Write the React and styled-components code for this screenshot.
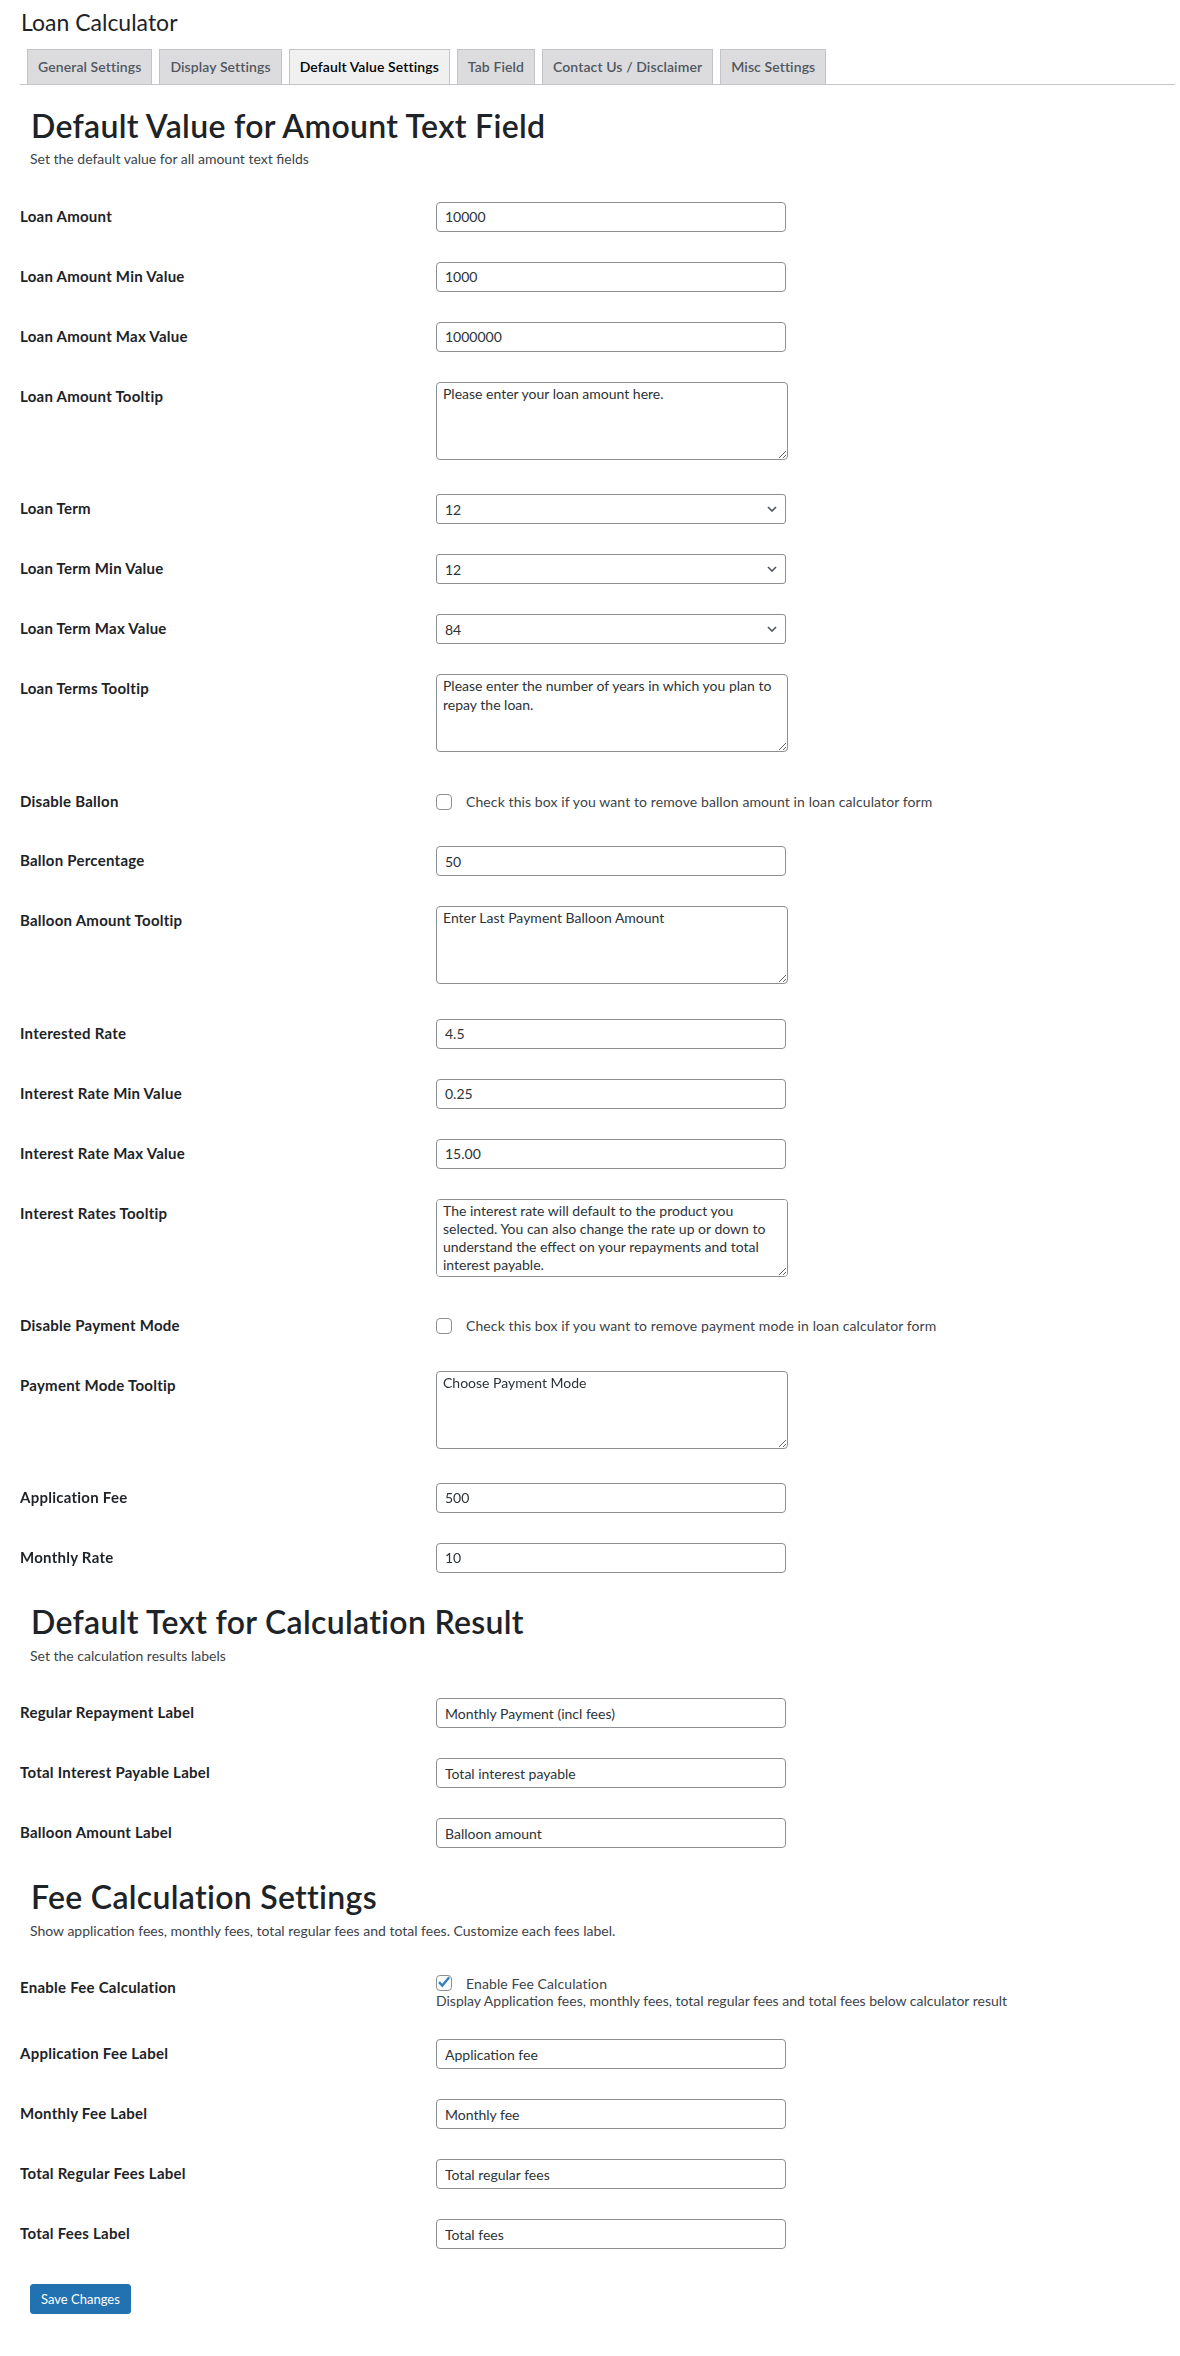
import React from 'react'
import styled, { createGlobalStyle } from 'styled-components'

const GlobalStyle = createGlobalStyle`
  body {
    margin: 0;
    background: #fff;
    color: #3c434a;
    font-family: Lato, "Noto Sans", sans-serif;
    font-size: 13px;
  }
`

const tabs = [
  'General Settings',
  'Display Settings',
  'Default Value Settings',
  'Tab Field',
  'Contact Us / Disclaimer',
  'Misc Settings',
]

const sections = [
  {
    title: 'Default Value for Amount Text Field',
    desc: 'Set the default value for all amount text fields',
    rows: [
      { label: 'Loan Amount', type: 'text', value: '10000' },
      { label: 'Loan Amount Min Value', type: 'text', value: '1000' },
      { label: 'Loan Amount Max Value', type: 'text', value: '1000000' },
      { label: 'Loan Amount Tooltip', type: 'textarea', value: 'Please enter your loan amount here.' },
      { label: 'Loan Term', type: 'select', value: '12' },
      { label: 'Loan Term Min Value', type: 'select', value: '12' },
      { label: 'Loan Term Max Value', type: 'select', value: '84' },
      {
        label: 'Loan Terms Tooltip',
        type: 'textarea',
        value: 'Please enter the number of years in which you plan to repay the loan.',
      },
      {
        label: 'Disable Ballon',
        type: 'checkbox',
        text: 'Check this box if you want to remove ballon amount in loan calculator form',
      },
      { label: 'Ballon Percentage', type: 'text', value: '50' },
      { label: 'Balloon Amount Tooltip', type: 'textarea', value: 'Enter Last Payment Balloon Amount' },
      { label: 'Interested Rate', type: 'text', value: '4.5' },
      { label: 'Interest Rate Min Value', type: 'text', value: '0.25' },
      { label: 'Interest Rate Max Value', type: 'text', value: '15.00' },
      {
        label: 'Interest Rates Tooltip',
        type: 'textarea',
        value:
          'The interest rate will default to the product you selected. You can also change the rate up or down to understand the effect on your repayments and total interest payable.',
      },
      {
        label: 'Disable Payment Mode',
        type: 'checkbox',
        text: 'Check this box if you want to remove payment mode in loan calculator form',
      },
      { label: 'Payment Mode Tooltip', type: 'textarea', value: 'Choose Payment Mode' },
      { label: 'Application Fee', type: 'text', value: '500' },
      { label: 'Monthly Rate', type: 'text', value: '10' },
    ],
  },
  {
    title: 'Default Text for Calculation Result',
    desc: 'Set the calculation results labels',
    rows: [
      { label: 'Regular Repayment Label', type: 'text', value: 'Monthly Payment (incl fees)' },
      { label: 'Total Interest Payable Label', type: 'text', value: 'Total interest payable' },
      { label: 'Balloon Amount Label', type: 'text', value: 'Balloon amount' },
    ],
  },
  {
    title: 'Fee Calculation Settings',
    desc: 'Show application fees, monthly fees, total regular fees and total fees. Customize each fees label.',
    rows: [
      {
        label: 'Enable Fee Calculation',
        type: 'fee',
        text: 'Enable Fee Calculation',
        note: 'Display Application fees, monthly fees, total regular fees and total fees below calculator result',
      },
      { label: 'Application Fee Label', type: 'text', value: 'Application fee' },
      { label: 'Monthly Fee Label', type: 'text', value: 'Monthly fee' },
      { label: 'Total Regular Fees Label', type: 'text', value: 'Total regular fees' },
      { label: 'Total Fees Label', type: 'text', value: 'Total fees' },
    ],
  },
]

const termOptions = ['12', '24', '36', '48', '60', '72', '84']

const Field = ({ row }) => {
  if (row.type === 'textarea') {
    return (
      <Cell>
        <TextArea defaultValue={row.value} />
      </Cell>
    )
  }
  if (row.type === 'select') {
    return (
      <Cell>
        <SelectWrap>
          <Select defaultValue={row.value}>
            {termOptions.map((o) => (
              <option key={o} value={o}>
                {o}
              </option>
            ))}
          </Select>
          <Chevron width="10" height="6" viewBox="0 0 10 6">
            <polyline points="1,1 5,5 9,1" fill="none" stroke="#50575e" strokeWidth="1.6" />
          </Chevron>
        </SelectWrap>
      </Cell>
    )
  }
  if (row.type === 'checkbox') {
    return (
      <CheckCell>
        <CheckLabel>
          <Check type="checkbox" />
          {row.text}
        </CheckLabel>
      </CheckCell>
    )
  }
  if (row.type === 'fee') {
    return (
      <Cell>
        <CheckLabel $tall>
          <CheckBox>
            <Check type="checkbox" defaultChecked />
            <Tick width="20" height="20" viewBox="0 0 20 20">
              <path d="M5 10.2 L8.3 13.6 L15.2 5.2" fill="none" stroke="#3582c4" strokeWidth="2.4" />
            </Tick>
          </CheckBox>
          {row.text}
        </CheckLabel>
        <Note>{row.note}</Note>
      </Cell>
    )
  }
  return (
    <Cell>
      <Input type="text" defaultValue={row.value} />
    </Cell>
  )
}

const App = () => {
  return (
    <Wrap>
      <GlobalStyle />
      <Title>Loan Calculator</Title>
      <Tabs>
        {tabs.map((t) => (
          <Tab key={t} $active={t === 'Default Value Settings'}>
            {t}
          </Tab>
        ))}
      </Tabs>
      <form>
        {sections.map((s, i) => (
          <Section key={s.title} $first={i === 0}>
            <Heading>{s.title}</Heading>
            <Desc>{s.desc}</Desc>
            <FormTable>
              {s.rows.map((r) => (
                <Row key={r.label}>
                  <Label>{r.label}</Label>
                  <Field row={r} />
                </Row>
              ))}
            </FormTable>
          </Section>
        ))}
        <Submit>
          <Button type="button">Save Changes</Button>
        </Submit>
      </form>
    </Wrap>
  )
}

//Styled Component
const Wrap = styled.div`
  padding: 0 5px 40px 20px;
`

const Title = styled.h1`
  margin: 0;
  padding: 8px 0 4px 1px;
  font-size: 23px;
  font-weight: 400;
  line-height: 1.3;
  color: #1d2327;
`

const Tabs = styled.nav`
  display: flex;
  margin-top: 7px;
  border-bottom: 1px solid #c3c4c7;
`

const Tab = styled.a`
  margin: 0 0 -1px 7px;
  padding: 5px 10px;
  border: 1px solid #c3c4c7;
  background: ${(p) => (p.$active ? '#f0f0f1' : '#dcdcde')};
  color: ${(p) => (p.$active ? '#000' : '#50575e')};
  font-size: 14px;
  font-weight: 600;
  letter-spacing: 0.1px;
  line-height: 24px;
  white-space: nowrap;
`

const Section = styled.div`
  margin-top: ${(p) => (p.$first ? '20px' : '13px')};
`

const Heading = styled.h2`
  margin: 0;
  padding-left: 11px;
  font-size: 32px;
  font-weight: 600;
  letter-spacing: 0.3px;
  line-height: 1.3;
  color: #1d2327;
`

const Desc = styled.p`
  margin: 3px 0 18px;
  padding-left: 10px;
  font-size: 14px;
  line-height: 19.5px;
  color: #3c434a;
`

const FormTable = styled.div`
  display: flex;
  flex-direction: column;
`

const Row = styled.div`
  display: grid;
  grid-template-columns: 416px 1fr;
`

const Label = styled.div`
  padding: 20px 10px 20px 0;
  font-size: 15px;
  font-weight: 700;
  letter-spacing: 0.25px;
  line-height: 18px;
  color: #1d2327;
`

const Cell = styled.div`
  padding: 15px 10px 15px 0;
  font-size: 14px;
  color: #3c434a;
`

const CheckCell = styled(Cell)`
  padding: 20.75px 10px 20.75px 0;
`

const Input = styled.input`
  box-sizing: border-box;
  display: block;
  width: 350px;
  height: 30px;
  padding: 0 8px;
  border: 1px solid #8c8f94;
  border-radius: 4px;
  background: #fff;
  color: #2c3338;
  font-family: inherit;
  font-size: 14px;
  line-height: 2;
`

const TextArea = styled.textarea`
  box-sizing: border-box;
  display: block;
  width: 352px;
  height: 78px;
  margin-bottom: 4.4px;
  padding: 2px 6px;
  border: 1px solid #8c8f94;
  border-radius: 4px;
  color: #2c3338;
  font-family: inherit;
  font-size: 14px;
  line-height: 1.3;
`

const SelectWrap = styled.div`
  position: relative;
  width: 350px;
`

const Select = styled.select`
  box-sizing: border-box;
  display: block;
  width: 100%;
  height: 30px;
  padding: 0 24px 0 8px;
  border: 1px solid #8c8f94;
  border-radius: 3px;
  background: #fff;
  color: #2c3338;
  font-family: inherit;
  font-size: 14px;
  appearance: none;
`

const Chevron = styled.svg`
  position: absolute;
  right: 9px;
  top: 12px;
  pointer-events: none;
`

const CheckLabel = styled.label`
  display: flex;
  align-items: center;
  gap: 14px;
  height: ${(p) => (p.$tall ? '20px' : '18px')};
  font-size: 14px;
  letter-spacing: 0.1px;
  color: #3c434a;
`

const CheckBox = styled.span`
  position: relative;
  display: inline-flex;
`

const Check = styled.input`
  box-sizing: border-box;
  width: 16px;
  height: 16px;
  margin: 0;
  border: 1px solid #8c8f94;
  border-radius: 4px;
  background: #fff;
  appearance: none;
`

const Tick = styled.svg`
  position: absolute;
  left: -2px;
  top: -3px;
  pointer-events: none;
`

const Note = styled.p`
  margin: 0;
  font-size: 14px;
  line-height: 16px;
  color: #3c434a;
`

const Submit = styled.p`
  margin: 20px 0 0;
  padding-left: 10px;
`

const Button = styled.button`
  min-height: 30px;
  padding: 0 10px;
  border: 1px solid #2271b1;
  border-radius: 3px;
  background: #2271b1;
  color: #fff;
  font-family: inherit;
  font-size: 13px;
  line-height: 28px;
`

export default App
